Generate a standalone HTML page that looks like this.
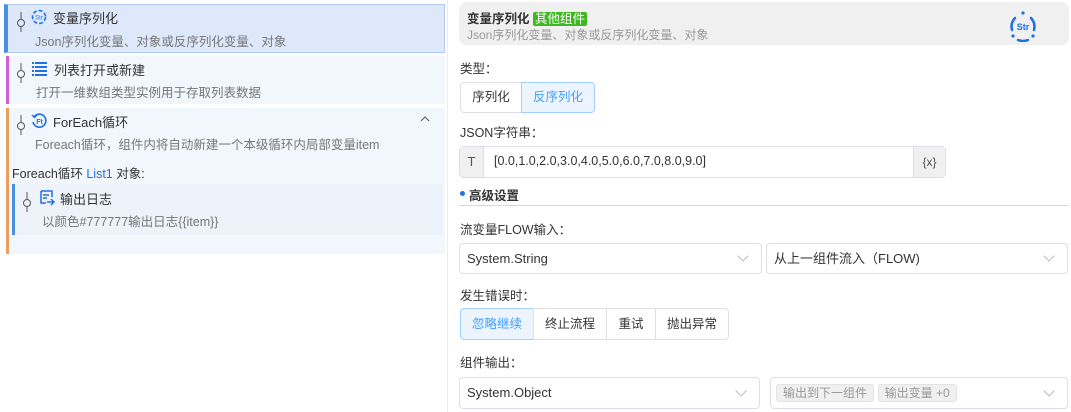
<!DOCTYPE html>
<html><head><meta charset="utf-8"><style>
*{box-sizing:border-box;margin:0;padding:0}
body{width:1071px;height:412px;background:#fff;font-family:"Liberation Sans","Noto Sans CJK SC",sans-serif;font-size:13px;color:#333;position:relative;overflow:hidden}
.a{position:absolute;white-space:nowrap}
.item{position:absolute;background:#f2f6fd}
.t{color:#333;font-size:13px}
.d{color:#777;font-size:12.5px}
.btn{position:absolute;border:1px solid #dcdfe6;background:#fff;text-align:center;font-size:12.5px;color:#333}
.sel{position:absolute;border:1px solid #dcdfe6;border-radius:4px;background:#fff;font-size:13px;color:#333;padding-left:7px}
.chev{position:absolute;right:14px;top:11px;width:8px;height:8px;border-right:1px solid #bbb;border-bottom:1px solid #bbb;transform:rotate(45deg)}
.lab{position:absolute;font-size:12.5px;color:#333;left:460px}
</style></head><body>
<div class="a" style="left:447px;top:0;width:1px;height:412px;background:#ececec"></div>

<div class="item" style="left:4px;top:4px;width:441px;height:49px;background:#dde8fb;border:1px solid #b0c9f5;border-left:4px solid #4a90e2"></div>
<svg class="a" style="left:16px;top:12px" width="10" height="20"><line x1="5" y1="0" x2="5" y2="7" stroke="#555"/><circle cx="5" cy="11" r="3.5" fill="none" stroke="#555"/><line x1="5" y1="15" x2="5" y2="20" stroke="#555"/></svg>
<svg class="a" style="left:31px;top:9px" width="16" height="16"><circle cx="8" cy="8" r="6.5" fill="none" stroke="#1e6fe8" stroke-width="1.6" stroke-dasharray="4 2"/><text x="8" y="10.5" font-size="6" fill="#1e6fe8" text-anchor="middle" font-family="Liberation Sans">Str</text></svg>
<div class="a t" style="left:53px;top:8px">变量序列化</div>
<div class="a d" style="left:35px;top:31px">Json序列化变量、对象或反序列化变量、对象</div>

<div class="item" style="left:6px;top:56px;width:439px;height:48px;border-left:3px solid #d35fd8"></div>
<svg class="a" style="left:16px;top:63px" width="10" height="20"><line x1="5" y1="0" x2="5" y2="7" stroke="#555"/><circle cx="5" cy="11" r="3.5" fill="none" stroke="#555"/><line x1="5" y1="15" x2="5" y2="20" stroke="#555"/></svg>
<svg class="a" style="left:32px;top:61px" width="15" height="15"><g fill="#1e6fe8"><rect x="0" y="1" width="2" height="2"/><rect x="3" y="1" width="12" height="2"/><rect x="0" y="5" width="2" height="2"/><rect x="3" y="5" width="12" height="2"/><rect x="0" y="9" width="2" height="2"/><rect x="3" y="9" width="12" height="2"/><rect x="0" y="13" width="2" height="2"/><rect x="3" y="13" width="12" height="2"/></g></svg>
<div class="a t" style="left:54px;top:60px">列表打开或新建</div>
<div class="a d" style="left:36px;top:82px">打开一维数组类型实例用于存取列表数据</div>

<div class="item" style="left:6px;top:108px;width:439px;height:146px;border-left:3px solid #e8a060"></div>
<svg class="a" style="left:16px;top:115px" width="10" height="20"><line x1="5" y1="0" x2="5" y2="7" stroke="#555"/><circle cx="5" cy="11" r="3.5" fill="none" stroke="#555"/><line x1="5" y1="15" x2="5" y2="20" stroke="#555"/></svg>
<svg class="a" style="left:31px;top:113px" width="16" height="16"><path d="M3 4 A6.5 6.5 0 1 1 2 9" fill="none" stroke="#1e6fe8" stroke-width="1.6"/><path d="M1 2 L3.5 4.5 L6 2" fill="none" stroke="#1e6fe8" stroke-width="1.4"/><text x="8.5" y="11" font-size="7" fill="#1e6fe8" text-anchor="middle" font-family="Liberation Sans" font-weight="bold">Ft</text></svg>
<div class="a t" style="left:53px;top:112px">ForEach循环</div>
<svg class="a" style="left:420px;top:115px" width="10" height="8"><path d="M1 6 L5 2 L9 6" fill="none" stroke="#666" stroke-width="1.2"/></svg>
<div class="a d" style="left:35px;top:134px">Foreach循环，组件内将自动新建一个本级循环内局部变量item</div>
<div class="a t" style="left:12px;top:163px;font-size:12.5px">Foreach循环 <span style="color:#1e6fe8">List1</span> 对象:</div>
<div class="item" style="left:12px;top:184px;width:430px;height:51px;background:#edf2fb;border-left:3px solid #4a90e2"></div>
<svg class="a" style="left:22px;top:192px" width="10" height="20"><line x1="5" y1="0" x2="5" y2="7" stroke="#555"/><circle cx="5" cy="11" r="3.5" fill="none" stroke="#555"/><line x1="5" y1="15" x2="5" y2="20" stroke="#555"/></svg>
<svg class="a" style="left:39px;top:190px" width="16" height="16"><path d="M2 1 H13 V7 M2 1 V13 H7" fill="none" stroke="#1e6fe8" stroke-width="1.5"/><path d="M4 5 H10 M4 8 H8 M8 12 H15 M12 9 L15 12 L12 15" fill="none" stroke="#1e6fe8" stroke-width="1.4"/></svg>
<div class="a t" style="left:60px;top:189px">输出日志</div>
<div class="a d" style="left:42px;top:211px">以颜色#777777输出日志{{item}}</div>

<div class="a" style="left:459px;top:2px;width:610px;height:43px;background:#f0f0f0;border-radius:8px"></div>
<div class="a" style="left:467px;top:8px;font-size:12.5px;font-weight:bold;color:#333">变量序列化 <span style="background:#3cb91f;color:#fff;font-weight:normal;padding:0 2px;border-radius:2px">其他组件</span></div>
<div class="a" style="left:467px;top:26px;font-size:12px;color:#999">Json序列化变量、对象或反序列化变量、对象</div>
<svg class="a" style="left:1007px;top:10px" width="32" height="32"><path d="M8 8 A13 13 0 0 0 5 20" fill="none" stroke="#1e6fe8" stroke-width="2.5" stroke-linecap="round"/><path d="M24 8 A13 13 0 0 1 27 20" fill="none" stroke="#1e6fe8" stroke-width="2.5" stroke-linecap="round"/><path d="M11 30 Q16 32 21 30" fill="none" stroke="#1e6fe8" stroke-width="2.5" stroke-linecap="round"/><circle cx="16" cy="3" r="1.6" fill="#1e6fe8"/><circle cx="6" cy="26" r="1.6" fill="#1e6fe8"/><circle cx="26" cy="26" r="1.6" fill="#1e6fe8"/><text x="16" y="20" font-size="9" fill="#1e6fe8" text-anchor="middle" font-family="Liberation Sans" font-weight="bold">Str</text></svg>

<div class="lab" style="top:58px">类型：</div>
<div class="btn" style="left:460px;top:82px;width:62px;height:31px;line-height:29px;border-radius:4px 0 0 4px">序列化</div>
<div class="btn" style="left:521px;top:82px;width:74px;height:31px;line-height:29px;border-radius:0 4px 4px 0;background:#ecf5ff;border-color:#a0cfff;color:#409eff">反序列化</div>

<div class="lab" style="top:122px">JSON字符串：</div>
<div class="a" style="left:459px;top:146px;width:487px;height:32px;border:1px solid #dcdfe6;border-radius:4px;background:#fff"></div>
<div class="a" style="left:460px;top:147px;width:24px;height:30px;background:#f0f0f0;border-right:1px solid #dcdfe6;text-align:center;line-height:30px;color:#555">T</div>
<div class="a" style="left:494px;top:154px;font-size:12.5px;color:#333">[0.0,1.0,2.0,3.0,4.0,5.0,6.0,7.0,8.0,9.0]</div>
<div class="a" style="left:913px;top:147px;width:32px;height:30px;background:#f0f0f0;border-left:1px solid #dcdfe6;text-align:center;line-height:30px;color:#555;font-size:12px">{x}</div>

<div class="a" style="left:460px;top:191px;width:5px;height:5px;border-radius:50%;background:#1e6fe8"></div>
<div class="a" style="left:469px;top:185px;font-size:12.5px;font-weight:bold;color:#333">高级设置</div>
<div class="a" style="left:459px;top:205px;width:610px;height:1px;background:#d8d8d8"></div>

<div class="lab" style="top:219px">流变量FLOW输入：</div>
<div class="sel" style="left:459px;top:243px;width:303px;height:31px;line-height:29px">System.String<div class="chev" style="top:8px"></div></div>
<div class="sel" style="left:766px;top:243px;width:302px;height:31px;line-height:29px">从上一组件流入（FLOW)<div class="chev" style="top:8px"></div></div>

<div class="lab" style="top:285px">发生错误时：</div>
<div class="btn" style="left:460px;top:308px;width:74px;height:32px;line-height:30px;border-radius:4px 0 0 4px;background:#ecf5ff;border-color:#a0cfff;color:#409eff">忽略继续</div>
<div class="btn" style="left:533px;top:308px;width:74px;height:32px;line-height:30px">终止流程</div>
<div class="btn" style="left:606px;top:308px;width:50px;height:32px;line-height:30px">重试</div>
<div class="btn" style="left:655px;top:308px;width:74px;height:32px;line-height:30px;border-radius:0 4px 4px 0">抛出异常</div>

<div class="lab" style="top:352px">组件输出：</div>
<div class="sel" style="left:459px;top:377px;width:301px;height:32px;line-height:30px">System.Object<div class="chev" style="top:9px"></div></div>
<div class="sel" style="left:770px;top:377px;width:298px;height:32px;line-height:30px;padding-left:5px"><span style="background:#f0f0f0;border:1px solid #e4e4e4;border-radius:3px;color:#999;font-size:12px;padding:1px 6px">输出到下一组件</span> <span style="background:#f0f0f0;border:1px solid #e4e4e4;border-radius:3px;color:#999;font-size:12px;padding:1px 6px">输出变量 +0</span><div class="chev" style="top:9px"></div></div>
</body></html>
